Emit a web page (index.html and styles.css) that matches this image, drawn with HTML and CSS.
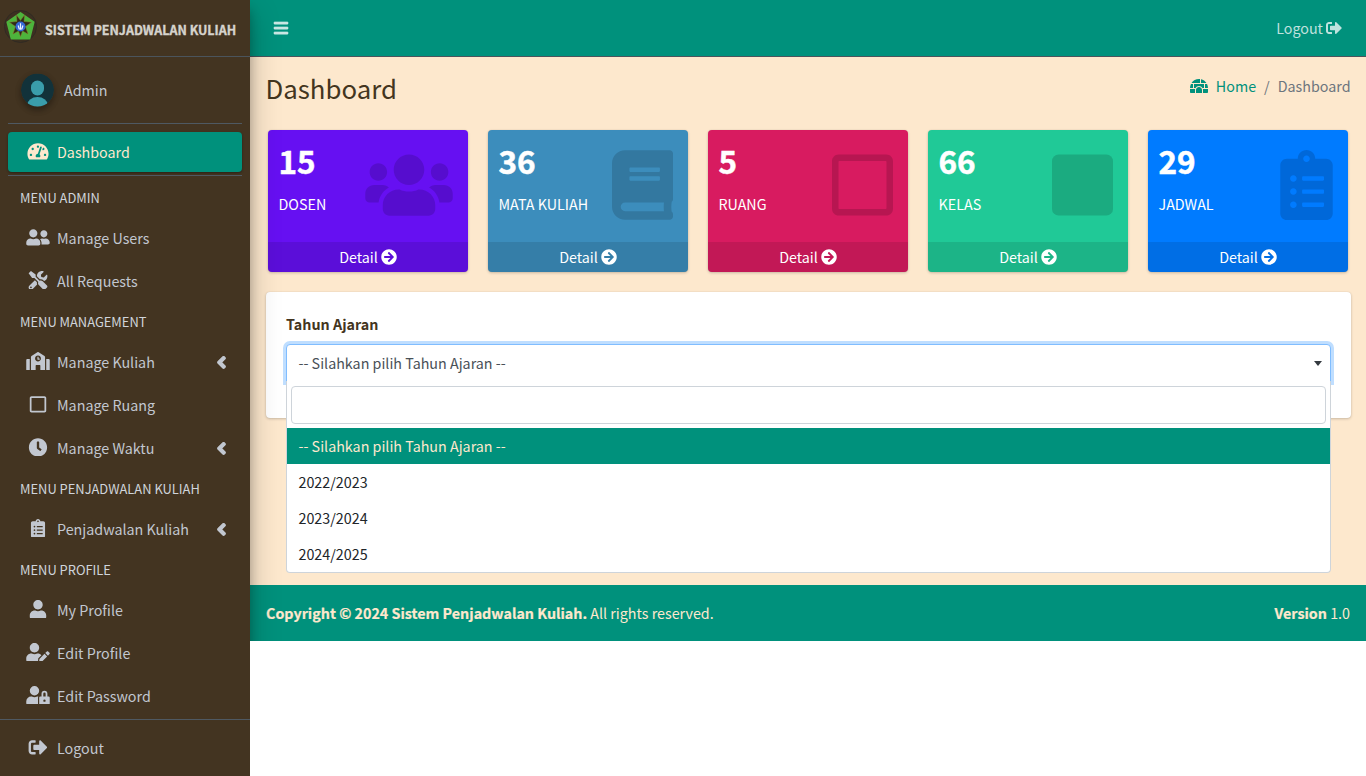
FILE: index.html
```html
<!DOCTYPE html>
<html lang="id">
<head>
<meta charset="utf-8">
<title>Dashboard</title>
<link rel="stylesheet" href="styles.css">
</head>
<body>
<svg class="sprite" aria-hidden="true">
  <symbol id="bars" viewBox="0 0 448 512"><path d="M16 132h416c8.800 0 16-7.200 16-16V76c0-8.800-7.200-16-16-16H16C7.200 60 0 67.200 0 76v40c0 8.800 7.200 16 16 16zm0 160h416c8.800 0 16-7.200 16-16v-40c0-8.800-7.200-16-16-16H16c-8.800 0-16 7.200-16 16v40c0 8.800 7.200 16 16 16zm0 160h416c8.800 0 16-7.200 16-16v-40c0-8.800-7.200-16-16-16H16c-8.800 0-16 7.200-16 16v40c0 8.800 7.200 16 16 16z" stroke="currentColor" stroke-width="18"/></symbol>
  <symbol id="signout" viewBox="0 0 512 512"><path d="M497 273L329 441c-15 15-41 4.500-41-17v-96H152c-13.300 0-24-10.700-24-24v-96c0-13.300 10.700-24 24-24h136V88c0-21.400 25.900-32 41-17l168 168c9.300 9.400 9.300 24.600 0 34zM192 436v-40c0-6.600-5.400-12-12-12H96c-17.700 0-32-14.300-32-32V160c0-17.700 14.300-32 32-32h84c6.600 0 12-5.400 12-12V76c0-6.600-5.400-12-12-12H96c-53 0-96 43-96 96v192c0 53 43 96 96 96h84c6.600 0 12-5.400 12-12z"/></symbol>
  <symbol id="gauge" viewBox="0 0 576 512"><path d="M288 32C128.940 32 0 160.940 0 320c0 52.800 14.250 102.260 39.060 144.800 5.610 9.620 16.300 15.200 27.440 15.200h443c11.140 0 21.830-5.580 27.440-15.200C561.750 422.260 576 372.800 576 320c0-159.060-128.940-288-288-288zm0 64c14.710 0 26.580 10.130 30.320 23.650-1.110 2.260-2.640 4.230-3.450 6.670l-9.220 27.670c-5.130 3.490-10.970 6.010-17.640 6.010-17.670 0-32-14.330-32-32S270.330 96 288 96zM96 384c-17.670 0-32-14.330-32-32s14.330-32 32-32 32 14.330 32 32-14.330 32-32 32zm48-160c-17.670 0-32-14.330-32-32s14.330-32 32-32 32 14.330 32 32-14.330 32-32 32zm246.770-72.410l-61.330 184C343.130 347.330 352 364.540 352 384c0 11.720-3.380 22.550-8.880 32H232.880c-5.500-9.450-8.880-20.280-8.880-32 0-33.940 26.500-61.430 59.900-63.590l61.340-184.010c4.170-12.560 17.730-19.450 30.360-15.170 12.570 4.190 19.350 17.790 15.170 30.360zm14.660 57.200l15.520-46.550c3.470-1.290 7.130-2.230 11.050-2.230 17.670 0 32 14.330 32 32s-14.330 32-32 32c-11.380-.01-20.890-6.280-26.570-15.220zM480 384c-17.670 0-32-14.330-32-32s14.330-32 32-32 32 14.330 32 32-14.330 32-32 32z"/></symbol>
  <symbol id="friends" viewBox="0 0 640 512"><path d="M192 256c61.900 0 112-50.100 112-112S253.900 32 192 32 80 82.100 80 144s50.100 112 112 112zm76.800 32h-8.300c-20.800 10-43.900 16-68.500 16s-47.600-6-68.500-16h-8.300C51.600 288 0 339.600 0 403.200V432c0 26.500 21.500 48 48 48h288c26.500 0 48-21.500 48-48v-28.800c0-63.600-51.600-115.200-115.200-115.200zM480 256c53 0 96-43 96-96s-43-96-96-96-96 43-96 96 43 96 96 96zm48 32h-3.800c-13.900 4.800-28.600 8-44.200 8s-30.300-3.200-44.200-8H432c-20.400 0-39.200 5.900-55.700 15.400 24.400 26.300 39.700 61.200 39.700 99.800v38.400c0 2.200-.5 4.300-.6 6.400H592c26.500 0 48-21.500 48-48 0-61.900-50.100-112-112-112z"/></symbol>
  <symbol id="tools" viewBox="0 0 512 512"><path d="M501.100 395.700L384 278.600c-23.100-23.100-57.600-27.600-85.400-13.900L192 158.100V96L64 0 0 64l96 128h62.100l106.600 106.600c-13.600 27.800-9.200 62.300 13.900 85.400l117.100 117.100c14.600 14.600 38.200 14.600 52.700 0l52.700-52.700c14.500-14.600 14.500-38.200 0-52.700zM331.700 225c28.300 0 54.900 11 74.900 31l19.400 19.400c15.800-6.900 30.800-16.500 43.800-29.500 37.100-37.100 49.700-89.300 37.900-136.700-2.200-9-13.500-12.100-20.100-5.500l-74.400 74.400-67.900-11.300L334 98.900l74.400-74.400c6.600-6.600 3.400-17.900-5.700-20.200-47.400-11.700-99.600.9-136.600 37.900-28.500 28.500-41.900 66.100-41.200 103.600l82.100 82.100c8.100-1.900 16.500-2.900 24.700-2.900zm-103.900 82l-56.700-56.700L18.700 402.800c-25 25-25 65.500 0 90.500s65.500 25 90.500 0l123.600-123.600c-7.600-19.900-9.900-41.600-5-62.700zM64 472c-13.200 0-24-10.800-24-24 0-13.300 10.700-24 24-24s24 10.700 24 24c0 13.200-10.700 24-24 24z"/></symbol>
  <symbol id="school" viewBox="0 0 640 512"><path d="M0 224v272c0 8.840 7.160 16 16 16h80V192H32c-17.670 0-32 14.330-32 32zm360-48h-24v-40c0-4.420-3.580-8-8-8h-16c-4.420 0-8 3.580-8 8v64c0 4.420 3.580 8 8 8h48c4.420 0 8-3.580 8-8v-16c0-4.420-3.580-8-8-8zm137.750-63.960l-160-106.670a32.020 32.020 0 0 0-35.500 0l-160 106.670A32.002 32.002 0 0 0 128 138.660V512h128V368c0-8.840 7.160-16 16-16h96c8.840 0 16 7.160 16 16v144h128V138.670c0-10.700-5.350-20.700-14.250-26.630zM320 256c-44.180 0-80-35.820-80-80s35.820-80 80-80 80 35.820 80 80-35.820 80-80 80zm288-64h-64v320h80c8.840 0 16-7.160 16-16V224c0-17.670-14.330-32-32-32z"/></symbol>
  <symbol id="square-o" viewBox="0 0 448 512"><path d="M400 32H48C21.500 32 0 53.500 0 80v352c0 26.500 21.500 48 48 48h352c26.500 0 48-21.500 48-48V80c0-26.500-21.500-48-48-48zm-6 400H54c-3.300 0-6-2.700-6-6V86c0-3.300 2.700-6 6-6h340c3.300 0 6 2.700 6 6v340c0 3.300-2.700 6-6 6z"/></symbol>
  <symbol id="square" viewBox="0 0 448 512"><rect y="32" width="448" height="448" rx="48"/></symbol>
  <symbol id="clock" viewBox="0 0 512 512"><path d="M256 8C119 8 8 119 8 256s111 248 248 248 248-111 248-248S393 8 256 8zm92.490 313l-20 25a16 16 0 0 1-22.490 2.500l-67-49.720a40 40 0 0 1-15-31.230V112a16 16 0 0 1 16-16h32a16 16 0 0 1 16 16v144l58 42.500a16 16 0 0 1 2.490 22.500z"/></symbol>
  <symbol id="angle" viewBox="0 0 256 512"><path d="M31.700 239l136-136c9.400-9.400 24.600-9.400 33.900 0l22.600 22.600c9.400 9.400 9.400 24.600 0 33.900L127.900 256l96.400 96.400c9.400 9.400 9.400 24.600 0 33.900L201.700 409c-9.400 9.400-24.600 9.400-33.900 0l-136-136c-9.500-9.400-9.500-24.600-.1-34z" stroke="currentColor" stroke-width="34"/></symbol>
  <symbol id="clipboard" viewBox="0 0 384 512"><path d="M336 64h-80c0-35.300-28.700-64-64-64s-64 28.700-64 64H48C21.500 64 0 85.500 0 112v352c0 26.500 21.500 48 48 48h288c26.500 0 48-21.500 48-48V112c0-26.500-21.500-48-48-48zM96 424c-13.300 0-24-10.700-24-24s10.700-24 24-24 24 10.700 24 24-10.700 24-24 24zm0-96c-13.300 0-24-10.700-24-24s10.700-24 24-24 24 10.700 24 24-10.700 24-24 24zm0-96c-13.300 0-24-10.700-24-24s10.700-24 24-24 24 10.700 24 24-10.700 24-24 24zm96-192c13.300 0 24 10.700 24 24s-10.700 24-24 24-24-10.700-24-24 10.700-24 24-24zm128 368c0 4.400-3.600 8-8 8H168c-4.400 0-8-3.600-8-8v-16c0-4.400 3.600-8 8-8h144c4.400 0 8 3.600 8 8v16zm0-96c0 4.400-3.600 8-8 8H168c-4.400 0-8-3.600-8-8v-16c0-4.400 3.600-8 8-8h144c4.400 0 8 3.600 8 8v16zm0-96c0 4.400-3.600 8-8 8H168c-4.400 0-8-3.600-8-8v-16c0-4.400 3.600-8 8-8h144c4.400 0 8 3.600 8 8v16z"/></symbol>
  <symbol id="user" viewBox="0 0 448 512"><path d="M224 256c70.700 0 128-57.300 128-128S294.700 0 224 0 96 57.300 96 128s57.300 128 128 128zm89.600 32h-16.700c-22.200 10.200-46.900 16-72.900 16s-50.600-5.800-72.900-16h-16.700C60.200 288 0 348.200 0 422.400V464c0 26.500 21.500 48 48 48h352c26.500 0 48-21.500 48-48v-41.600c0-74.200-60.200-134.400-134.400-134.400z"/></symbol>
  <symbol id="user-edit" viewBox="0 0 640 512"><path d="M224 256c70.700 0 128-57.300 128-128S294.700 0 224 0 96 57.300 96 128s57.300 128 128 128zm89.600 32h-16.700c-22.200 10.200-46.900 16-72.900 16s-50.600-5.800-72.900-16h-16.700C60.200 288 0 348.200 0 422.400V464c0 26.500 21.500 48 48 48h274.900c-2.400-6.800-3.400-14-2.600-21.300l6.800-60.900 1.200-11.100 7.900-7.900 77.300-77.300c-24.500-27.700-60-45.500-99.900-45.500zm45.300 145.300l-6.800 61c-1.100 10.200 7.500 18.800 17.600 17.600l60.900-6.800 137.900-137.900-71.700-71.700-137.900 137.800zM633 268.900L595.100 231c-9.300-9.300-24.500-9.300-33.800 0l-37.800 37.800-4.100 4.100 71.800 71.700 41.800-41.800c9.300-9.400 9.300-24.500 0-33.900z"/></symbol>
  <symbol id="user-lock" viewBox="0 0 640 512"><path d="M224 256A128 128 0 1 0 96 128a128 128 0 0 0 128 128zm96 64a63.080 63.080 0 0 1 8.100-30.500c-4.800-.5-9.500-1.500-14.500-1.500h-16.700a174.080 174.080 0 0 1-145.800 0h-16.700A134.430 134.430 0 0 0 0 422.400V464a48 48 0 0 0 48 48h280.900a63.540 63.540 0 0 1-8.900-32zm288-32h-32v-80a80 80 0 0 0-160 0v80h-32a32 32 0 0 0-32 32v160a32 32 0 0 0 32 32h224a32 32 0 0 0 32-32V320a32 32 0 0 0-32-32zM496 432a32 32 0 1 1 32-32 32 32 0 0 1-32 32zm32-144h-64v-80a32 32 0 0 1 64 0z"/></symbol>
  <symbol id="users" viewBox="0 0 640 512"><path d="M96 224c35.300 0 64-28.700 64-64s-28.700-64-64-64-64 28.700-64 64 28.700 64 64 64zm448 0c35.300 0 64-28.700 64-64s-28.700-64-64-64-64 28.700-64 64 28.700 64 64 64zm32 32h-64c-17.600 0-33.500 7.100-45.100 18.600 40.300 22.100 68.900 62 75.100 109.400h66c17.700 0 32-14.300 32-32v-32c0-35.300-28.700-64-64-64zm-256 0c61.900 0 112-50.100 112-112S381.900 32 320 32 208 82.100 208 144s50.100 112 112 112zm76.800 32h-8.300c-20.800 10-43.900 16-68.500 16s-47.600-6-68.500-16h-8.300C179.600 288 128 339.600 128 403.200V432c0 26.500 21.500 48 48 48h288c26.500 0 48-21.500 48-48v-28.800c0-63.600-51.600-115.200-115.200-115.200zm-223.700-13.400C161.500 263.100 145.600 256 128 256H64c-35.300 0-64 28.700-64 64v32c0 17.700 14.300 32 32 32h65.900c6.300-47.400 34.900-87.300 75.200-109.400z"/></symbol>
  <symbol id="book" viewBox="0 0 448 512"><path d="M448 360V24c0-13.300-10.700-24-24-24H96C43 0 0 43 0 96v320c0 53 43 96 96 96h328c13.300 0 24-10.700 24-24v-16c0-7.500-3.500-14.300-8.900-18.700-4.200-15.400-4.200-59.300 0-74.700 5.400-4.300 8.900-11.100 8.900-18.600zM128 134c0-3.300 2.700-6 6-6h212c3.300 0 6 2.700 6 6v20c0 3.300-2.700 6-6 6H134c-3.300 0-6-2.700-6-6v-20zm0 64c0-3.300 2.700-6 6-6h212c3.300 0 6 2.700 6 6v20c0 3.300-2.700 6-6 6H134c-3.300 0-6-2.700-6-6v-20zm253.400 250H96c-17.700 0-32-14.300-32-32 0-17.600 14.400-32 32-32h285.400c-1.900 17.100-1.900 46.900 0 64z"/></symbol>
  <symbol id="arrow" viewBox="0 0 512 512"><path d="M256 8c137 0 248 111 248 248S393 504 256 504 8 393 8 256 119 8 256 8zm-28.900 143.600l75.500 72.400H120c-13.300 0-24 10.700-24 24v16c0 13.300 10.700 24 24 24h182.600l-75.500 72.400c-9.700 9.300-9.900 24.800-.4 34.300l11 10.900c9.400 9.400 24.600 9.400 33.900 0L404.300 273c9.400-9.400 9.400-24.600 0-33.900L271.600 106.300c-9.400-9.400-24.600-9.400-33.900 0l-11 10.900c-9.500 9.600-9.300 25.100.4 34.400z"/></symbol>
  <symbol id="igloo" viewBox="0 0 576 512"><path d="M320 33.900c-10.500-1.200-21.200-1.900-32-1.900-99.800 0-187.800 50.800-239.400 128H320V33.900zM96 192H30.300C11.100 230.600 0 274 0 320h96V192zM352 39.400V160h175.400C487.200 99.900 424.800 55.900 352 39.400zM480 320h96c0-46-11.100-89.400-30.300-128H480v128zm-64 64v96h128c17.700 0 32-14.300 32-32v-96H411.500c2.600 10.300 4.500 20.900 4.500 32zm32-192H128v128h49.800c22.200-38.100 63-64 110.200-64s88 25.900 110.200 64H448V192zM0 448c0 17.700 14.300 32 32 32h128v-96c0-11.100 1.900-21.700 4.500-32H0v96zm288-160c-53 0-96 43-96 96v96h192v-96c0-53-43-96-96-96z"/></symbol>
</svg>

<div class="wrapper">
  <aside class="sidebar">
    <a class="brand">
      <svg class="brand-logo" viewBox="0 0 33 33">
        <circle cx="16.500" cy="16.500" r="16" fill="#3d3020" stroke="#302a24"/>
        <path d="M16.500 2.800L29.800 12.200l-4.200 16.600H7.400L3.200 12.200z" fill="#4db43c" stroke="#4db43c" stroke-width="1.500" stroke-linejoin="round"/>
        <path d="M16.500 10.500l4-5.500-.5 6.500 7.500.8-6 4.200 2.500 7.500-5.500-3-2 5.500-2-5.500-5.500 3 2.500-7.500-6-4.200 7.500-.8-.5-6.500z" fill="#2f2a17" stroke="#8a7428" stroke-width=".5"/>
        <circle cx="16.500" cy="16.500" r="5" fill="#3568d4"/>
        <path d="M16.500 13.200v6.500M14.200 15.500l1 3.500h2.700l1-3.500" fill="none" stroke="#eef2ff" stroke-width="1.200"/>
      </svg>
      <span>SISTEM PENJADWALAN KULIAH</span>
    </a>
    <div class="user-panel">
      <svg class="avatar" viewBox="0 0 33 33">
        <defs><clipPath id="round"><circle cx="16.500" cy="16.500" r="16.500"/></clipPath></defs>
        <g clip-path="url(#round)"><rect width="33" height="33" fill="#12323a"/><rect x="10" y="7" width="13" height="15" rx="6.500" fill="#3a9dab"/><ellipse cx="16.500" cy="32" rx="10.500" ry="8.500" fill="#3a9dab"/></g>
      </svg>
      <span>Admin</span>
    </div>
    <nav class="menu">
      <div class="menu-top"><a class="link active"><svg><use href="#gauge"/></svg>Dashboard</a></div>
      <div class="head">MENU ADMIN</div>
      <a class="link"><svg><use href="#friends"/></svg>Manage Users</a>
      <a class="link"><svg><use href="#tools"/></svg>All Requests</a>
      <div class="head">MENU MANAGEMENT</div>
      <a class="link"><svg><use href="#school"/></svg>Manage Kuliah<svg class="angle"><use href="#angle"/></svg></a>
      <a class="link"><svg><use href="#square-o"/></svg>Manage Ruang</a>
      <a class="link"><svg><use href="#clock"/></svg>Manage Waktu<svg class="angle"><use href="#angle"/></svg></a>
      <div class="head">MENU PENJADWALAN KULIAH</div>
      <a class="link"><svg><use href="#clipboard"/></svg>Penjadwalan Kuliah<svg class="angle"><use href="#angle"/></svg></a>
      <div class="head">MENU PROFILE</div>
      <a class="link"><svg><use href="#user"/></svg>My Profile</a>
      <a class="link"><svg><use href="#user-edit"/></svg>Edit Profile</a>
      <a class="link"><svg><use href="#user-lock"/></svg>Edit Password</a>
    </nav>
    <div class="side-bottom"><a class="link"><svg><use href="#signout"/></svg>Logout</a></div>
  </aside>

  <div class="main">
    <header class="navbar">
      <svg class="burger"><use href="#bars"/></svg>
      <a class="logout">Logout<svg><use href="#signout"/></svg></a>
    </header>
    <main class="content">
      <div class="title-row">
        <h1>Dashboard</h1>
        <div class="crumbs"><svg><use href="#igloo"/></svg><a>Home</a><span class="sep">/</span><span>Dashboard</span></div>
      </div>
      <section class="stats">
        <article class="stat indigo"><div class="stat-body"><h3>15</h3><p>DOSEN</p><svg class="w88"><use href="#users"/></svg></div><a class="detail">Detail<svg><use href="#arrow"/></svg></a></article>
        <article class="stat steel"><div class="stat-body"><h3>36</h3><p>MATA KULIAH</p><svg class="w61"><use href="#book"/></svg></div><a class="detail">Detail<svg><use href="#arrow"/></svg></a></article>
        <article class="stat maroon"><div class="stat-body"><h3>5</h3><p>RUANG</p><svg class="w61"><use href="#square-o"/></svg></div><a class="detail">Detail<svg><use href="#arrow"/></svg></a></article>
        <article class="stat green"><div class="stat-body"><h3>66</h3><p>KELAS</p><svg class="w61"><use href="#square"/></svg></div><a class="detail">Detail<svg><use href="#arrow"/></svg></a></article>
        <article class="stat blue"><div class="stat-body"><h3>29</h3><p>JADWAL</p><svg class="w53"><use href="#clipboard"/></svg></div><a class="detail">Detail<svg><use href="#arrow"/></svg></a></article>
      </section>
      <section class="card">
        <label>Tahun Ajaran</label>
        <div class="select">
          <span>-- Silahkan pilih Tahun Ajaran --</span><i class="caret"></i>
          <div class="dropdown">
            <div class="search"></div>
            <div class="option chosen">-- Silahkan pilih Tahun Ajaran --</div>
            <div class="option">2022/2023</div>
            <div class="option">2023/2024</div>
            <div class="option">2024/2025</div>
          </div>
        </div>
      </section>
    </main>
    <footer class="footer">
      <div><b>Copyright © 2024 Sistem Penjadwalan Kuliah.</b> All rights reserved.</div>
      <div><b>Version</b> 1.0</div>
    </footer>
  </div>
</div>
</body>
</html>
```
FILE: styles.css
```css
* { box-sizing: border-box; }
body {
  margin: 0;
  background: #fff;
  color: #433520;
  font: 14.3px/24px "Noto Sans CJK SC", "Open Sans", sans-serif;
  overflow: hidden;
}
h1, h3, p { margin: 0; }
svg { fill: currentColor; flex: none; }
.sprite { display: none; }
.wrapper { display: flex; align-items: flex-start; height: 776px; }

/* sidebar */
.sidebar {
  position: relative;
  z-index: 2;
  flex: none;
  width: 250px;
  height: 776px;
  background: #433421;
  color: #c2c7d0;
}
.brand {
  display: flex;
  align-items: center;
  gap: 8px;
  height: 57px;
  padding: 3px 0 0 4px;
  border-bottom: 1px solid #4b545c;
  color: #d6d3cd;
  font-size: 12.500px;
  font-weight: 700;
  white-space: nowrap;
  -webkit-text-stroke: .35px currentColor;
}
.brand-logo { width: 33px; height: 33px; margin-top: -6px; }
.user-panel {
  display: flex;
  align-items: center;
  gap: 10px;
  height: 67px;
  margin: 0 8px;
  padding-left: 13px;
  border-bottom: 1px solid #4f5962;
}
.avatar { width: 33px; height: 34px; border-radius: 50%; box-shadow: 0 3px 6px rgba(0,0,0,.16), 0 3px 6px rgba(0,0,0,.23); }
.menu { padding: 0 8px; }
.menu-top { padding: 8px 0 3px; border-bottom: 1px solid #4f5962; margin-bottom: 3px; }
.link { display: flex; align-items: center; height: 43px; padding: 0 0 2px 17px; gap: 6px; }
.link svg { width: 26px; height: 18.800px; margin: 0 0 1px; }
.link.active {
  height: 40px;
  padding-bottom: 0;
  background: #00917c;
  color: #fde8cd;
  border-radius: 4px;
  box-shadow: 0 1px 3px rgba(0,0,0,.12), 0 1px 2px rgba(0,0,0,.24);
}
.link.active svg { margin-bottom: 2px; }
.link .angle { width: 11px; height: 18.800px; margin: 1px 15px 0 auto; }
.head { height: 38px; padding-left: 12px; line-height: 38px; font-size: 12.900px; color: #d0d4db; }
.side-bottom { border-top: 1px solid #4f5962; padding: 7px 8px 0; margin-top: 1px; }

/* main column */
.main { position: relative; flex: 1; overflow: hidden; }
.main::before {
  content: "";
  position: absolute;
  z-index: 5;
  left: -250px;
  top: 0;
  width: 250px;
  height: 776px;
  box-shadow: 0 14px 28px rgba(0,0,0,.25), 0 10px 10px rgba(0,0,0,.22);
}
.navbar {
  display: flex;
  align-items: center;
  justify-content: space-between;
  height: 57px;
  padding: 0 24px 0 23px;
  background: #00917c;
  border-bottom: 1px solid #4b545c;
  color: rgba(255,255,255,.75);
}
.burger { width: 16px; height: 16px; }
.logout { display: flex; align-items: center; gap: 3px; }
.logout svg { width: 16px; height: 16px; margin-top: -1px; }
.content { height: 528px; padding: 16px 15px 0 16px; background: #fde8cd; }
.title-row { display: flex; justify-content: space-between; height: 57px; }
h1 { margin: -2px 0 0 -.5px; font-size: 25.800px; line-height: 34px; font-weight: 400; }
.crumbs { display: flex; align-items: center; height: 26px; color: #6c757d; padding-right: .5px; }
.crumbs svg { width: 18px; height: 16px; margin-right: 8px; color: #00917c; }
.crumbs a { color: #00917c; }
.sep { margin: 0 8px; }
.stats { display: grid; grid-template-columns: repeat(5, 200px); gap: 20px; padding-left: 2px; }
.stat { height: 142px; color: #fff; border-radius: 4px; overflow: hidden; box-shadow: 0 0 1px rgba(0,0,0,.125), 0 1px 3px rgba(0,0,0,.2); }
.stat-body { position: relative; height: 112px; padding: 9px 10.500px; }
.stat h3 { font-size: 31.500px; line-height: 42px; font-weight: 700; -webkit-text-stroke: .5px currentColor; }
.stat p { margin-top: 11px; }
.stat-body svg { position: absolute; right: 15px; top: 20px; height: 70px; color: rgba(0,0,0,.15); }
.w88 { width: 88px; }
.w61 { width: 61px; }
.w53 { width: 53px; }
.detail { display: flex; align-items: center; justify-content: center; gap: 3px; height: 30px; background: rgba(0,0,0,.1); }
.detail svg { width: 16px; height: 16px; margin-top: -1px; }
.indigo { background: #6610f2; }
.steel { background: #3c8dbc; }
.maroon { background: #d81b60; }
.green { background: #20c997; }
.blue { background: #007bff; }
.card {
  height: 126px;
  margin-top: 20px;
  padding: 20px;
  background: #fff;
  border-radius: 4px;
  box-shadow: 0 0 1px rgba(0,0,0,.125), 0 1px 3px rgba(0,0,0,.2);
}
.card label { display: block; height: 32px; font-weight: 700; }
.select {
  position: relative;
  display: flex;
  align-items: center;
  justify-content: space-between;
  height: 38px;
  padding: 0 8px 0 11.500px;
  border: 1px solid #80bdff;
  border-radius: 4px 4px 0 0;
  box-shadow: 0 0 0 3px #bfdeff;
  background: #fff;
  color: #495057;
}
.caret { border: 4px solid transparent; border-top: 5px solid #343a40; border-bottom: 0; }
.dropdown {
  position: absolute;
  left: -1px;
  right: -1px;
  top: 36px;
  z-index: 4;
  padding-top: 5px;
  background: #fff;
  border: 1px solid #ced4da;
  border-top: 0;
  border-radius: 0 0 4px 4px;
  color: #212529;
}
.search { height: 38px; margin: 0 4px 4px; border: 1px solid #ced4da; border-radius: 4px; }
.option { height: 36px; padding: 6px 11.500px; }
.option.chosen { background: #00917c; color: #fde8cd; }
.footer {
  display: flex;
  align-items: center;
  justify-content: space-between;
  height: 56px;
  padding: 0 16px;
  background: #00917c;
  color: #fde8cd;
}
.footer b { -webkit-text-stroke: .2px currentColor; }
```
